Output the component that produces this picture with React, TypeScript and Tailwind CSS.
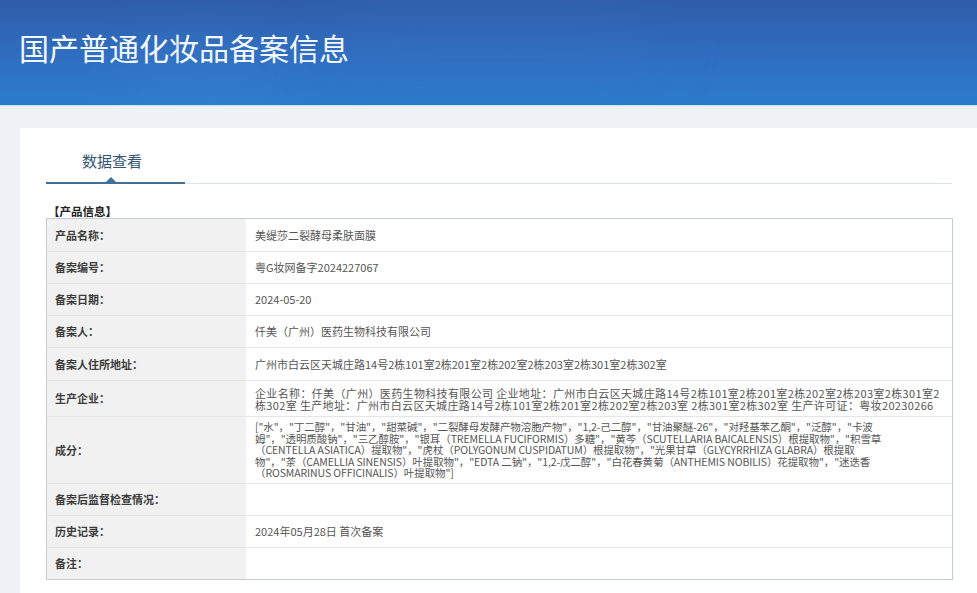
import React from 'react';

const FONT = '"Microsoft YaHei", "Noto Sans CJK SC", "Noto Sans", sans-serif';

interface Row {
  label: string;
  value?: React.ReactNode;
  height: string;
}

const ENTERPRISE_LINES = [
  '企业名称：仟美（广州）医药生物科技有限公司 企业地址：广州市白云区天城庄路14号2栋101室2栋201室2栋202室2栋203室2栋301室2',
  '栋302室 生产地址：广州市白云区天城庄路14号2栋101室2栋201室2栋202室2栋203室 2栋301室2栋302室 生产许可证：粤妆20230266',
];

const INGREDIENT_LINES = [
  '["水"，"丁二醇"，"甘油"，"甜菜碱"，"二裂酵母发酵产物溶胞产物"，"1,2-己二醇"，"甘油聚醚-26"，"对羟基苯乙酮"，"泛醇"，"卡波',
  '姆"，"透明质酸钠"，"三乙醇胺"，"银耳（TREMELLA FUCIFORMIS）多糖"，"黄芩（SCUTELLARIA BAICALENSIS）根提取物"，"积雪草',
  '（CENTELLA ASIATICA）提取物"，"虎杖（POLYGONUM CUSPIDATUM）根提取物"，"光果甘草（GLYCYRRHIZA GLABRA）根提取',
  '物"，"茶（CAMELLIA SINENSIS）叶提取物"，"EDTA 二钠"，"1,2-戊二醇"，"白花春黄菊（ANTHEMIS NOBILIS）花提取物"，"迷迭香',
  '（ROSMARINUS OFFICINALIS）叶提取物"]',
];

const ROWS: Row[] = [
  { label: '产品名称：', value: '美缇莎二裂酵母柔肤面膜', height: 'h-[33px]' },
  { label: '备案编号：', value: '粤G妆网备字2024227067', height: 'h-[32px]' },
  { label: '备案日期：', value: '2024-05-20', height: 'h-[32px]' },
  { label: '备案人：', value: '仟美（广州）医药生物科技有限公司', height: 'h-[32px]' },
  {
    label: '备案人住所地址：',
    value: '广州市白云区天城庄路14号2栋101室2栋201室2栋202室2栋203室2栋301室2栋302室',
    height: 'h-[33px]',
  },
  {
    label: '生产企业：',
    value: (
      <div className="leading-[12px] tracking-[0.35px]">
        {ENTERPRISE_LINES.map((line) => (
          <div key={line} className="whitespace-nowrap">{line}</div>
        ))}
      </div>
    ),
    height: 'h-[36px]',
  },
  {
    label: '成分：',
    value: (
      <div className="text-[10.5px] leading-[11.5px] tracking-[-0.1px]">
        {INGREDIENT_LINES.map((line) => (
          <div key={line} className="whitespace-nowrap">{line}</div>
        ))}
      </div>
    ),
    height: 'h-[67px]',
  },
  { label: '备案后监督检查情况：', height: 'h-[32px]' },
  { label: '历史记录：', value: '2024年05月28日 首次备案', height: 'h-[32px]' },
  { label: '备注：', height: 'h-[31px]' },
];

function InfoTable() {
  return (
    <div className="w-[907px] border border-[#c3ccd5] bg-white">
      {ROWS.map((row, i) => (
        <div
          key={row.label}
          className={`flex ${row.height} ${i < ROWS.length - 1 ? 'border-b border-[#e3e5e8]' : ''}`}
        >
          <div className="flex w-[199px] shrink-0 items-center bg-[#f1f1f1] pl-[8px] text-[11px] font-bold text-[#3c3c3c]">
            {row.label}
          </div>
          <div className="flex flex-1 items-center pl-[9px] text-[11px] text-[#555]">
            {row.value}
          </div>
        </div>
      ))}
    </div>
  );
}

export default function App() {
  return (
    <div className="h-[593px] w-full overflow-hidden bg-[#eef2f6]" style={{ fontFamily: FONT }}>
      {/* Header banner */}
      <header className="relative h-[106px] overflow-hidden bg-gradient-to-b from-[#2f5ca9] via-[#2f6dbf] to-[#2b7ccd]">
        <div className="absolute left-[120px] top-[50px] h-[60px] w-[160px] rounded-full bg-[#4a8ad6] opacity-30 blur-2xl" />
        <div className="absolute left-[330px] top-[10px] h-[50px] w-[320px] rounded-full bg-[#3b74c0] opacity-40 blur-2xl" />
        <div className="relative flex h-full items-center pb-[12px] pl-[19px]">
          <h1 className="text-[30px] font-normal leading-none text-[#f3f8fc]">国产普通化妆品备案信息</h1>
        </div>
        <div className="absolute bottom-0 left-0 h-[1px] w-full bg-[#bfe7f6]" />
      </header>

      <div className="h-[22px]" />

      {/* Main panel */}
      <main className="ml-[20px] h-full bg-white pl-[26px]">
        <div className="pl-[36px] pt-[22px] text-[15px] leading-[22px] text-[#34546f]">数据查看</div>

        <div className="relative mt-[10px] flex h-[2px] w-[906px]">
          <div className="h-[2px] w-[139px] bg-[#3f7099]" />
          <div className="mt-[1px] h-[1px] flex-1 bg-[#dde2e7]" />
          <div className="absolute left-[60px] top-[-5px] h-0 w-0 border-x-[5px] border-b-[5px] border-x-transparent border-b-[#3f7099]" />
        </div>

        <div className="ml-[2px] mt-[21px] text-[11.5px] font-bold leading-[13px] text-[#222]">【产品信息】</div>

        <InfoTable />
      </main>
    </div>
  );
}
